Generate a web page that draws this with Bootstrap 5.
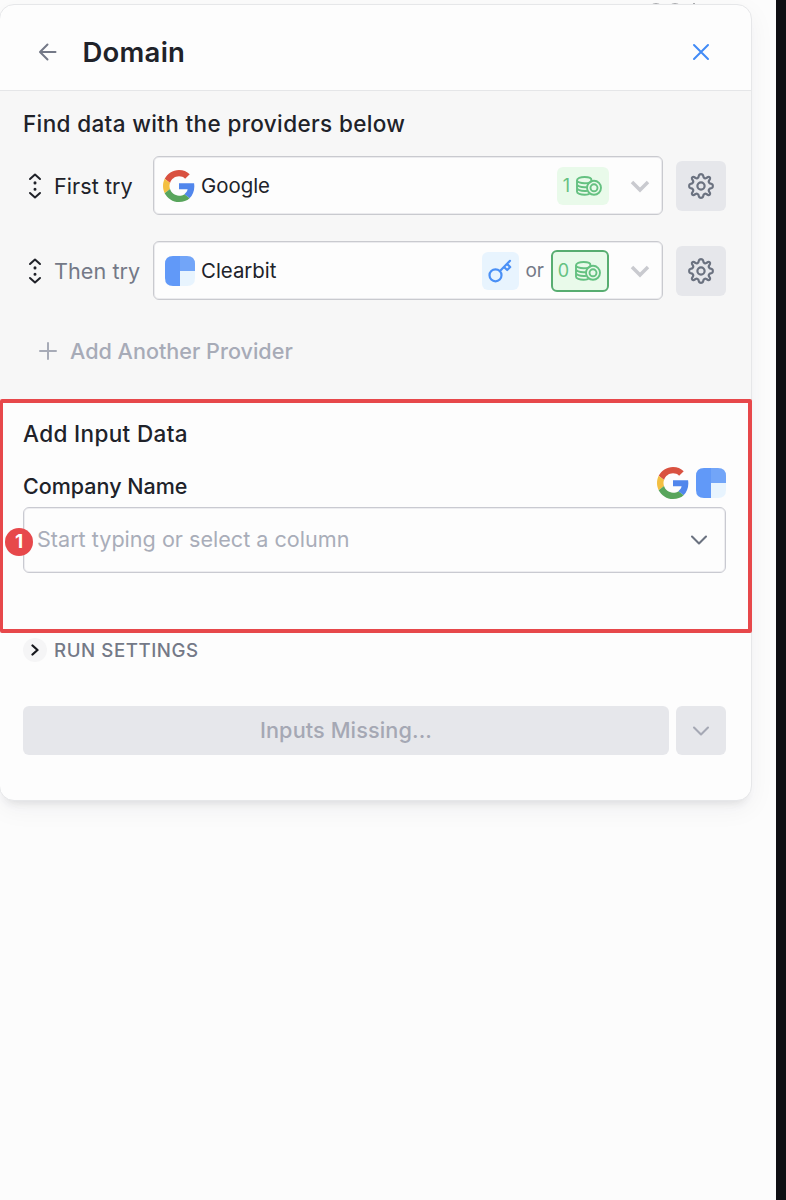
<!DOCTYPE html>
<html lang="en">
<head>
<meta charset="utf-8">
<meta name="viewport" content="width=device-width, initial-scale=1">
<title>Domain</title>
<link href="https://cdn.jsdelivr.net/npm/bootstrap@5.3.0/dist/css/bootstrap.min.css" rel="stylesheet">
<style>
body{font-family:Inter,"Liberation Sans",sans-serif;background:#fcfcfc;color:#202229;font-size:22px;line-height:1.2}
svg{display:block;flex:none}
.icon{fill:none;stroke:currentColor;stroke-linecap:round;stroke-linejoin:round}
.page-shell{height:1200px;border-right:10px solid #0e0f13}
.top-edge{height:4px}
.panel{width:753px;height:797px;margin-left:-1px;border:1px solid #e6e7e9;border-radius:15px;background:#fdfdfd;box-shadow:0 8px 8px -6px rgba(40,45,60,.12),0 8px 26px rgba(40,45,60,.05)}
.panel-head{height:86px;border-bottom:1px solid #e5e6e8;padding:8px 41px 0 37px}
.panel-title{font-size:27.5px;font-weight:600;letter-spacing:.25px;margin-left:23.5px;padding-top:2px}
.providers{height:308px;background:#f7f7f7;padding:19px 25px 0 23px}
.heading-text{font-size:22.5px;font-weight:500;height:28px;line-height:28px;letter-spacing:.36px}
.field-label{font-size:21.5px;font-weight:500;padding-top:7px}
.provider-row{height:59px;margin-top:18px}
.provider-row + .provider-row{margin-top:26px}
.sorter{margin-left:5px}
.row-label{width:99px;margin-left:12px;padding-top:2px;font-size:21.6px;letter-spacing:.05px}
.muted{color:#747987}
.picker{width:510px;height:59px;border:1px solid #c9cacf;box-shadow:inset 0 0 0 1px #ebebee;border-radius:6px;background:#fdfdfd;padding-left:9px;padding-right:12px}
.provider-name{font-size:20.4px;margin-left:6px;padding-top:2px}
.brand-square{margin-left:2px}
.or-text{font-size:19px;margin:0 6.5px;padding-top:2px}
.caret{margin-left:21.5px}
.chip{height:38px;border-radius:6px;font-size:18px}
.chip-green{background:#e9faea;color:#65c181;width:52px;gap:6px}
.chip-outline{width:58px;height:42px;border:2px solid #58ad71}
.chip-blue{width:37px;background:#e8f4fe;color:#4a90f6}
.square{width:50px;height:50px;border-radius:6px;background:#e6e7eb;color:#6b7280}
.add-more{color:#a7abb7;font-weight:500;font-size:21.6px;margin-top:38px;padding-left:14px}
.add-more span{margin-left:11px;padding-top:1px}
.inputs{position:relative;height:234px;width:752px;border:4px solid #e7484b;border-left-width:3px;border-radius:2px;padding:17px 22px 0 20px}
.label-row{height:32px;margin-top:19px}
.label-brands{gap:7px}
.field{height:66px;margin-top:8px;border:1px solid #c9cad1;box-shadow:inset 0 0 0 1px #ededf0;border-radius:6px;padding:0 17px 0 13px;color:#a9adb9;font-size:21.6px}
.step{position:absolute;left:2px;top:125px;width:28px;height:28px;border-radius:50%;background:#e7484b;color:#fff;font-size:19px;font-weight:700}
.run-row{height:34px;padding-left:23px;color:#747987;font-size:18.7px;font-weight:500;letter-spacing:.55px}
.run-row .run-text{padding-top:2px}
.dot{width:24px;height:24px;border-radius:50%;background:#f5f5f6;margin-right:7px}
.actions{padding:0 25px 0 23px;margin-top:39px;gap:7px}
.submit{height:49px;border-radius:6px;background:#e6e7eb;color:#a5a8b4;font-size:21.7px;font-weight:500;letter-spacing:.1px}
.submit-more{width:50px}
</style>
</head>
<body>
<svg width="0" height="0" class="position-absolute">
<symbol id="google" viewBox="0 0 48 48"><path fill="#d95140" d="M24 9.500c3.500 0 6.700 1.200 9.200 3.600l6.900-6.900C35.900 2.400 30.500 0 24 0 14.600 0 6.500 5.400 2.600 13.200l8 6.200C12.400 13.700 17.700 9.500 24 9.500z"/><path fill="#5186ec" d="M47 24.600c0-1.600-.2-3.100-.4-4.600H24v9h12.900c-.6 3-2.300 5.500-4.800 7.200l7.700 6c4.500-4.200 7.200-10.400 7.200-17.600z"/><path fill="#f3bf42" d="M10.500 28.600c-.5-1.500-.8-3-.8-4.600s.3-3.100.8-4.600l-8-6.200C.9 16.500 0 20.100 0 24s.9 7.500 2.600 10.800z"/><path fill="#58a55c" d="M24 48c6.500 0 11.900-2.100 15.900-5.800l-7.700-6c-2.200 1.500-4.900 2.300-8.200 2.300-6.300 0-11.600-4.200-13.500-9.900l-8 6.200C6.500 42.600 14.600 48 24 48z"/></symbol>
<symbol id="clearbit" viewBox="0 0 30 30"><path fill="#6199f8" d="M15 0H8Q0 0 0 8v14q0 8 8 8h7z"/><path fill="#72a5f8" d="M15 0h7q8 0 8 8v7H15z"/><path fill="#e8f4fe" d="M15 15h15v7q0 8-8 8h-7z"/></symbol>
<symbol id="gear" viewBox="-13 -13 26 26"><path stroke-width="2.200" d="M-2-10.800C-1.400-12.200 1.400-12.200 2-10.800L2.600-8.800C3.300-7.900 4.400-7.500 5.400-8L7-9C8.300-9.500 9.500-8.300 9-7L8-5.400C7.500-4.400 7.900-3.300 8.800-2.600L10.800-2C12.200-1.400 12.200 1.400 10.800 2L8.800 2.600C7.900 3.300 7.500 4.400 8 5.400L9 7C9.500 8.300 8.300 9.500 7 9L5.400 8C4.400 7.500 3.300 7.900 2.600 8.800L2 10.800C1.400 12.200-1.400 12.200-2 10.800L-2.600 8.800C-3.300 7.900-4.400 7.500-5.400 8L-7 9C-8.300 9.500-9.500 8.300-9 7L-8 5.400C-7.500 4.400-7.900 3.300-8.800 2.600L-10.800 2C-12.200 1.400-12.200-1.400-10.800-2L-8.800-2.600C-7.900-3.300-7.500-4.400-8-5.400L-9-7C-9.500-8.300-8.300-9.500-7-9L-5.400-8C-4.400-7.500-3.300-7.900-2.600-8.800z"/><circle r="3.600" stroke-width="2.200"/></symbol>
<symbol id="coins" viewBox="0 0 26 20"><g stroke-width="1.900"><path d="M15.500 4.200C15.500 6 12.600 7.300 8.600 7.300S1 6 1 4.200 4.400 1 8.600 1s6.900 1.400 6.900 3.200zM1 4.200v11.600c0 1.700 3.500 3 7.600 3 1.500 0 3-.2 4.200-.6M1 8.200c0 1.700 3.500 3 7.600 3h1.600M1 12c0 1.700 3.500 3 7.600 3h1.700"/><circle cx="18" cy="11.800" r="7"/><circle cx="18" cy="11.800" r="3.500"/></g></symbol>
<symbol id="sort" viewBox="0 0 14 26"><path stroke-width="2" d="M2 6l5-4.500L12 6M2 20l5 4.500L12 20"/><path stroke-width="3" d="M7 9.800v.1M7 16.200v.1"/></symbol>
<symbol id="caret" viewBox="0 0 20 14"><path stroke-linecap="butt" stroke-linejoin="miter" stroke-width="3.500" d="M2 3l8 8 8-8"/></symbol>
<symbol id="chevron" viewBox="0 0 18 12"><path stroke-width="2.100" d="M2 2.500l7 7 7-7"/></symbol>
</svg>
<div class="page-shell">
<div class="top-edge"><svg width="700" height="4" fill="none" stroke="#8e9094" stroke-width="1.500"><path d="M653 4.500q3-1 6 0M672 4.500q3-1 6 0M693 4h2"/></svg></div>
<main class="panel">
<header class="panel-head d-flex align-items-center">
<svg class="icon muted" width="22" height="22" viewBox="0 0 22 22" stroke-width="2"><path d="M18.500 11H3.500M10.500 3.500L3 11l7.500 7.500"/></svg>
<h1 class="panel-title mb-0">Domain</h1>
<svg class="ms-auto" width="18" height="18" viewBox="0 0 18 18" fill="none" stroke="#428bf6" stroke-width="2" stroke-linecap="round"><path d="M2 2l14 14M16 2L2 16"/></svg>
</header>
<section class="providers">
<h2 class="heading-text mb-0">Find data with the providers below</h2>
<div class="provider-row d-flex align-items-center">
<svg class="icon sorter" width="14" height="26"><use href="#sort"/></svg>
<span class="row-label">First try</span>
<div class="picker d-flex align-items-center"><svg width="32" height="32"><use href="#google"/></svg><span class="provider-name">Google</span>
<span class="chip chip-green d-flex align-items-center justify-content-center ms-auto">1<svg class="icon" width="26" height="20"><use href="#coins"/></svg></span>
<svg class="icon caret" width="20" height="14" color="#c9cacf"><use href="#caret"/></svg></div>
<button class="square btn p-0 border-0 d-flex align-items-center justify-content-center ms-auto" aria-label="Settings"><svg class="icon" width="26" height="26"><use href="#gear"/></svg></button>
</div>
<div class="provider-row d-flex align-items-center">
<svg class="icon sorter" width="14" height="26"><use href="#sort"/></svg>
<span class="row-label muted">Then try</span>
<div class="picker d-flex align-items-center"><svg width="30" height="30" class="brand-square"><use href="#clearbit"/></svg><span class="provider-name">Clearbit</span>
<span class="chip chip-blue d-flex align-items-center justify-content-center ms-auto"><svg class="icon" width="24" height="24" viewBox="0 0 24 24" stroke-width="2.200"><circle cx="7.500" cy="16.300" r="6"/><path d="M12 12L22 1.800M16 8l3.200 3 3-3-3.200-3.100"/></svg></span>
<span class="or-text muted">or</span>
<span class="chip chip-green chip-outline d-flex align-items-center justify-content-center">0<svg class="icon" width="26" height="20"><use href="#coins"/></svg></span>
<svg class="icon caret" width="20" height="14" color="#c9cacf"><use href="#caret"/></svg></div>
<button class="square btn p-0 border-0 d-flex align-items-center justify-content-center ms-auto" aria-label="Settings"><svg class="icon" width="26" height="26"><use href="#gear"/></svg></button>
</div>
<div class="add-more d-flex align-items-center"><svg class="icon" width="22" height="22" viewBox="0 0 22 22" stroke-width="2"><path d="M3 11h16M11 3v16"/></svg><span>Add Another Provider</span></div>
</section>
<section class="inputs">
<h2 class="heading-text mb-0">Add Input Data</h2>
<div class="label-row d-flex align-items-center justify-content-between">
<span class="field-label">Company Name</span>
<div class="label-brands d-flex align-items-center"><svg width="32" height="32"><use href="#google"/></svg><svg width="30" height="30"><use href="#clearbit"/></svg></div>
</div>
<div class="field d-flex align-items-center"><span>Start typing or select a column</span><svg class="icon ms-auto" width="18" height="12" color="#6b7280"><use href="#chevron"/></svg></div>
<span class="step d-flex align-items-center justify-content-center">1</span>
</section>
<div class="run-row d-flex align-items-center"><span class="dot d-flex align-items-center justify-content-center"><svg class="icon" width="8" height="12" viewBox="0 0 8 12" color="#17181d" stroke-width="2.300"><path d="M1.500 1.500L6.500 6l-5 4.500"/></svg></span><span class="run-text">RUN SETTINGS</span></div>
<div class="actions d-flex">
<button class="submit btn border-0 p-0 flex-fill">Inputs Missing...</button>
<button class="submit submit-more btn border-0 p-0 d-flex align-items-center justify-content-center" aria-label="More"><svg class="icon" width="18" height="12"><use href="#chevron"/></svg></button>
</div>
</main>
</div>
<script src="https://cdn.jsdelivr.net/npm/bootstrap@5.3.0/dist/js/bootstrap.bundle.min.js"></script>
</body>
</html>
